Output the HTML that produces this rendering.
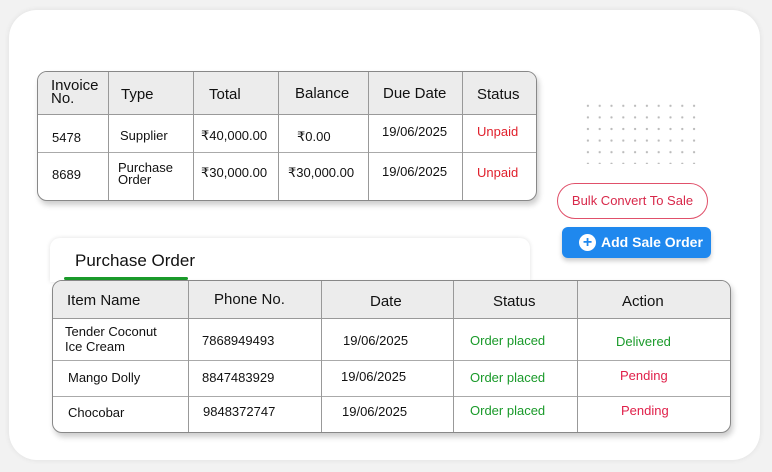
<!DOCTYPE html>
<html><head><meta charset="utf-8"><style>
*{margin:0;padding:0;box-sizing:border-box}
body{width:772px;height:472px;background:#f2f2f2;font-family:"Liberation Sans",sans-serif;position:relative;overflow:hidden;color:#111}
.card{position:absolute;left:9px;top:10px;width:751px;height:450px;background:#fff;border-radius:28px;box-shadow:0 0 6px rgba(0,0,0,.08)}
.t{position:absolute;background:#fff;border:1px solid #888;border-radius:10px;overflow:hidden;box-shadow:2px 4px 6px rgba(0,0,0,.2)}
.hd{position:absolute;left:0;top:0;right:0;background:#ececec;border-bottom:1px solid #999}
.vl{position:absolute;top:0;bottom:0;width:1px;background:#999}
.hl{position:absolute;left:0;right:0;height:1px;background:#aaa}
.x{position:absolute;font-size:13px;white-space:nowrap;line-height:14px}
.h{font-size:15px}
.r{color:#e0202c}.g{color:#1a9a2a}.p{color:#e0204a}
.dots{position:absolute;left:582px;top:100px;width:120px;height:64px;background-image:radial-gradient(circle,#bbb 1px,transparent 1.3px);background-size:11.8px 11.6px}
</style></head><body>
<div class="card"></div>

<div class="t" style="left:37px;top:71px;width:500px;height:130px">
 <div class="hd" style="height:43px"></div>
 <div class="hl" style="top:80px"></div>
 <div class="vl" style="left:70px"></div><div class="vl" style="left:155px"></div><div class="vl" style="left:240px"></div><div class="vl" style="left:330px"></div><div class="vl" style="left:424px"></div>
</div>
<div class="x h" style="left:51px;top:79px;line-height:13px">Invoice<br>No.</div>
<div class="x h" style="left:121px;top:88px">Type</div>
<div class="x h" style="left:209px;top:88px">Total</div>
<div class="x h" style="left:295px;top:87px">Balance</div>
<div class="x h" style="left:383px;top:87px">Due Date</div>
<div class="x h" style="left:477px;top:88px">Status</div>
<div class="x" style="left:52px;top:131px">5478</div>
<div class="x" style="left:120px;top:129px">Supplier</div>
<div class="x" style="left:201px;top:129px">₹40,000.00</div>
<div class="x" style="left:297px;top:130px">₹0.00</div>
<div class="x" style="left:382px;top:125px">19/06/2025</div>
<div class="x r" style="left:477px;top:125px">Unpaid</div>
<div class="x" style="left:52px;top:168px">8689</div>
<div class="x" style="left:118px;top:162px;line-height:12px">Purchase<br>Order</div>
<div class="x" style="left:201px;top:166px">₹30,000.00</div>
<div class="x" style="left:288px;top:166px">₹30,000.00</div>
<div class="x" style="left:382px;top:165px">19/06/2025</div>
<div class="x r" style="left:477px;top:166px">Unpaid</div>

<div class="dots"></div>

<div style="position:absolute;left:557px;top:183px;width:151px;height:36px;border:1px solid #e0506a;border-radius:18px;background:#fff;color:#d8284a;font-size:13px;text-align:center;line-height:34px">Bulk Convert To Sale</div>
<div style="position:absolute;left:562px;top:227px;width:149px;height:31px;background:#1f88ee;border-radius:6px;box-shadow:0 3px 5px rgba(0,0,0,.2);color:#fff;font-size:14px;font-weight:bold;line-height:30px;padding-left:39px">Add Sale Order</div>
<div style="position:absolute;left:579px;top:234px;width:17px;height:17px;border-radius:50%;background:#fff;color:#1f88ee;font-weight:bold;font-size:16px;line-height:17px;text-align:center">+</div>

<div style="position:absolute;left:50px;top:238px;width:480px;height:44px;background:#fff;border-radius:10px 10px 0 0;box-shadow:0 0 5px rgba(0,0,0,.12)"></div>
<div class="x" style="left:75px;top:252px;font-size:17px;line-height:18px">Purchase Order</div>
<div style="position:absolute;left:64px;top:277px;width:124px;height:3px;background:#1a9a2a;border-radius:2px"></div>

<div class="t" style="left:52px;top:280px;width:679px;height:153px">
 <div class="hd" style="height:38px"></div>
 <div class="hl" style="top:79px"></div><div class="hl" style="top:115px"></div>
 <div class="vl" style="left:135px"></div><div class="vl" style="left:268px"></div><div class="vl" style="left:400px"></div><div class="vl" style="left:524px"></div>
</div>
<div class="x h" style="left:67px;top:294px">Item Name</div>
<div class="x h" style="left:214px;top:293px">Phone No.</div>
<div class="x h" style="left:370px;top:295px">Date</div>
<div class="x h" style="left:493px;top:295px">Status</div>
<div class="x h" style="left:622px;top:295px">Action</div>
<div class="x" style="left:65px;top:324px;line-height:15px">Tender Coconut<br>Ice Cream</div>
<div class="x" style="left:202px;top:334px">7868949493</div>
<div class="x" style="left:343px;top:334px">19/06/2025</div>
<div class="x g" style="left:470px;top:334px">Order placed</div>
<div class="x g" style="left:616px;top:335px">Delivered</div>
<div class="x" style="left:68px;top:371px">Mango Dolly</div>
<div class="x" style="left:202px;top:371px">8847483929</div>
<div class="x" style="left:341px;top:370px">19/06/2025</div>
<div class="x g" style="left:470px;top:371px">Order placed</div>
<div class="x p" style="left:620px;top:369px">Pending</div>
<div class="x" style="left:68px;top:406px">Chocobar</div>
<div class="x" style="left:203px;top:405px">9848372747</div>
<div class="x" style="left:342px;top:405px">19/06/2025</div>
<div class="x g" style="left:470px;top:404px">Order placed</div>
<div class="x p" style="left:621px;top:404px">Pending</div>
</body></html>
